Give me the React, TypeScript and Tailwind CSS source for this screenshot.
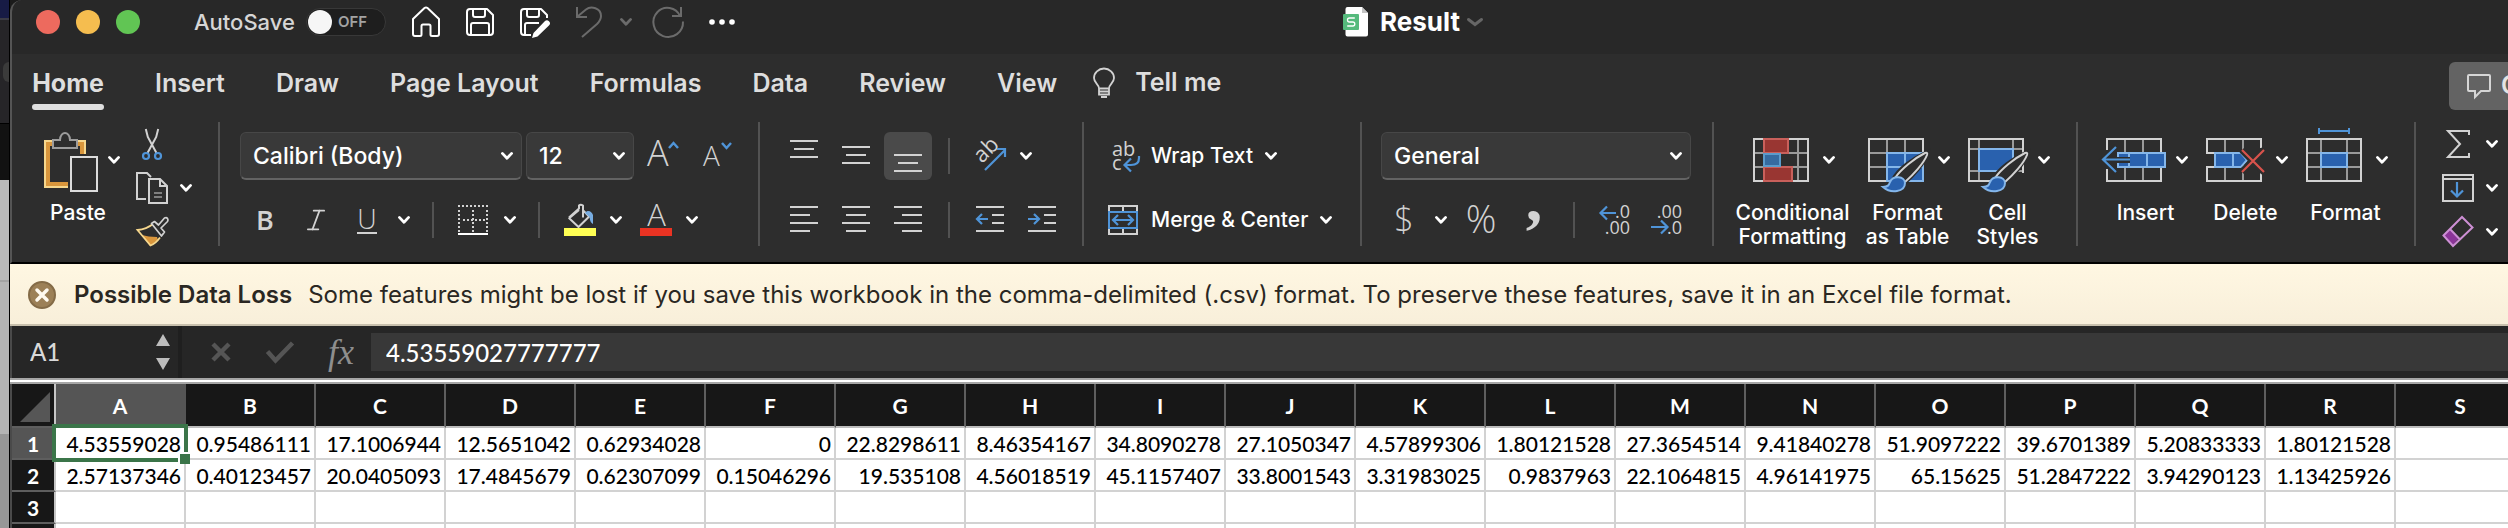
import React from "react";
import { Italic } from "lucide-react";

const LIGHT = "#d2d2d2";
const MID = "#9a9a9a";
const BLUE = "#4f94d8";
const PALE_BLUE = "#84b6ea";
const FILL_BLUE = "#2961ae";
const PANEL = "#2d2d2d";

type IconProps = { w: number; h: number; children: React.ReactNode; className?: string };

function Icon({ w, h, children, className = "" }: IconProps) {
  return (
    <svg
      width={w}
      height={h}
      viewBox={`0 0 ${w} ${h}`}
      fill="none"
      aria-hidden="true"
      className={`shrink-0 overflow-visible ${className}`}
    >
      {children}
    </svg>
  );
}

function Chevron({ className = "text-white" }: { className?: string }) {
  return (
    <Icon w={12} h={8} className={className}>
      <path d="M1.4 1.4 6 6.2l4.6-4.8" stroke="currentColor" strokeWidth="2.8" strokeLinecap="round" strokeLinejoin="round" />
    </Icon>
  );
}

function Lines({ rows }: { rows: [number, number, number][] }) {
  return (
    <Icon w={28} h={28}>
      {rows.map(([x, y, len]) => (
        <path key={y} d={`M${x} ${y}h${len}`} stroke={LIGHT} strokeWidth="2" />
      ))}
    </Icon>
  );
}

function Tool({ label, children, className = "" }: { label: string; children: React.ReactNode; className?: string }) {
  return (
    <button type="button" aria-label={label} className={`flex shrink-0 items-center justify-center ${className}`}>
      {children}
    </button>
  );
}

function Rule({ className = "" }: { className?: string }) {
  return <div className={`h-9 w-0.5 shrink-0 bg-[#525252] ${className}`} />;
}

function GroupRule() {
  return <div className="h-[124px] w-0.5 shrink-0 bg-[#525252]" />;
}

function Combo({ label, value, className }: { label: string; value: string; className: string }) {
  return (
    <div className={`relative shrink-0 ${className}`}>
      <select
        aria-label={label}
        defaultValue={value}
        className="h-12 w-full appearance-none rounded-[6px] border border-b-2 border-[#474747] border-b-[#636363] bg-[#393939] pl-3 pr-8 text-[23px] font-medium leading-[44px] text-white"
      >
        <option>{value}</option>
      </select>
      <div className="pointer-events-none absolute inset-y-0 right-[9px] flex items-center">
        <Chevron />
      </div>
    </div>
  );
}

/* ---------- title bar ---------- */

function TitleBar() {
  return (
    <header className="flex h-[54px] items-center rounded-tl-xl border-l-2 border-[#555555] bg-[#282828] pb-[10px] pl-6">
      <div className="flex gap-4">
        <button type="button" aria-label="Close" className="size-6 rounded-full bg-[#ed6a5e]" />
        <button type="button" aria-label="Minimize" className="size-6 rounded-full bg-[#f5bd4f]" />
        <button type="button" aria-label="Zoom" className="size-6 rounded-full bg-[#61c554]" />
      </div>
      <label htmlFor="autosave" className="ml-[54px] w-[112px] text-[22px] font-medium text-[#d6d6d6]">
        AutoSave
      </label>
      <button
        id="autosave"
        type="button"
        role="switch"
        aria-checked="false"
        className="flex h-7 w-20 items-center gap-1.5 rounded-full border border-[#383838] bg-[#1e1e1e] pl-px"
      >
        <span className="size-6 rounded-full bg-[#f6f6f6]" />
        <span className="text-[15px] font-semibold text-[#a3a3a3]">OFF</span>
      </button>

      <div className="ml-[26px] flex items-center">
        <Tool label="Start" className="mr-[26px]">
          <Icon w={28} h={32}>
            <path
              d="M1 13 12.500 2.100q1.500-1.300 3 0L27 13v15a2 2 0 0 1-2 2h-5a1.500 1.500 0 0 1-1.500-1.500V20a1.500 1.500 0 0 0-1.500-1.500h-6A1.500 1.500 0 0 0 9.500 20v8.500A1.500 1.500 0 0 1 8 30H3a2 2 0 0 1-2-2Z"
              stroke="#fff"
              strokeWidth="2"
              strokeLinejoin="round"
            />
          </Icon>
        </Tool>
        <Tool label="Save" className="mr-[26px]">
          <Icon w={28} h={28}>
            <path d="M4 1h17l6 6v17a3 3 0 0 1-3 3H4a3 3 0 0 1-3-3V4a3 3 0 0 1 3-3ZM7 1v6a2 2 0 0 0 2 2h8a2 2 0 0 0 2-2V1M5 27V17a2 2 0 0 1 2-2h14a2 2 0 0 1 2 2v10" stroke="#fff" strokeWidth="2" strokeLinejoin="round" />
          </Icon>
        </Tool>
        <Tool label="Save as" className="mr-[26px]">
          <Icon w={30} h={28}>
            <path d="M11 27H4a3 3 0 0 1-3-3V4a3 3 0 0 1 3-3h17l6 6v3M7 1v6a2 2 0 0 0 2 2h8a2 2 0 0 0 2-2V1M5 27V17a2 2 0 0 1 2-2h12" stroke="#fff" strokeWidth="2" strokeLinejoin="round" />
            <path d="M12 30l1.500-5L25 13q2-1.700 4 .2t.2 4L17.500 28.500Z" fill="#fff" />
          </Icon>
        </Tool>
        <Tool label="Undo" className="mr-[18px] text-[#6b6b6b]">
          <Icon w={26} h={32}>
            <path d="M1 1v10h10M1.500 10.500 10 3.500C15-.5 25 2 25 10c0 4-2 6-4 8L6 31" stroke="currentColor" strokeWidth="2" />
          </Icon>
        </Tool>
        <Tool label="Undo history" className="mr-5">
          <Chevron className="text-[#6b6b6b]" />
        </Tool>
        <Tool label="Redo" className="mr-[25px] text-[#6b6b6b]">
          <Icon w={32} h={32}>
            <path d="M29 1v9H20M28 10C24 1 12-1 5.500 6A14.800 14.800 0 1 0 31 15.500" stroke="currentColor" strokeWidth="2" />
          </Icon>
        </Tool>
        <Tool label="More commands">
          <Icon w={26} h={6}>
            <circle cx="3" cy="3" r="2.800" fill="#fff" />
            <circle cx="13" cy="3" r="2.800" fill="#fff" />
            <circle cx="23" cy="3" r="2.800" fill="#fff" />
          </Icon>
        </Tool>
      </div>

      <button type="button" className="ml-[608px] flex items-center">
        <Icon w={25} h={30} className="mr-3">
          <path d="M4.500 0H19l6 6v21.500a2 2 0 0 1-2 2H4.500a2 2 0 0 1-2-2V2a2 2 0 0 1 2-2Z" fill="#fff" />
          <path d="M19 0v6h6Z" fill="#c4c4c4" />
          <rect y="7" width="16" height="16" rx="1" fill="#55ba7c" />
          <path d="M11.800 11H6.500a2 2 0 0 0 0 4h3.300a2 2 0 0 1 0 4H4.200" stroke="#fff" strokeWidth="1.300" />
        </Icon>
        <span className="text-[26px] font-bold leading-8 text-white">Result</span>
        <Icon w={16} h={9} className="ml-[7px]">
          <path d="m1.500 1.500 6.500 5 6.500-5" stroke="#666" strokeWidth="3" strokeLinecap="round" />
        </Icon>
      </button>
    </header>
  );
}

/* ---------- ribbon tabs ---------- */

const tabs = ["Home", "Insert", "Draw", "Page Layout", "Formulas", "Data", "Review", "View"];

function Tabs() {
  return (
    <nav className="flex h-[60px] items-start border-l-2 border-[#555555] bg-[#2d2d2d] pl-5 pt-1.5">
      <div className="flex gap-[51px]">
        {tabs.map((t, i) => (
          <button
            key={t}
            type="button"
            className={
              i === 0
                ? "flex h-[50px] w-[72px] flex-col justify-between text-[25px] font-bold leading-[46px] text-[#dedede]"
                : "h-[46px] text-[25px] font-semibold leading-[46px] text-[#dedede]"
            }
          >
            <span className="h-11">{t}</span>
            {i === 0 && <span className="h-1.5 w-full shrink-0 rounded-full bg-[#dedede]" />}
          </button>
        ))}
      </div>
      <button type="button" className="ml-9 flex h-[46px] items-center gap-5 text-[25px] font-semibold text-[#dedede]">
        <Icon w={22} h={30}>
          <path d="M6 20.500C6 16 1 15 1 10a10 9.500 0 0 1 20 0c0 5-5 6-5 10.500ZM6 20.500v6h10v-6M6 23.500h10" stroke={LIGHT} strokeWidth="1.800" />
          <path d="M8 29h6" stroke={LIGHT} strokeWidth="2" />
        </Icon>
        Tell me
      </button>
      <div className="flex-1" />
      <button
        type="button"
        className="mt-0.5 flex h-12 w-[59px] shrink-0 items-center gap-2.5 overflow-hidden whitespace-nowrap rounded-l-[6px] bg-[#636363] pl-[18px] text-[25px] font-semibold text-[#e4e4e4]"
      >
        <Icon w={24} h={24}>
          <path d="M2 1h20a1 1 0 0 1 1 1v14a1 1 0 0 1-1 1h-8l-6 6v-6H2a1 1 0 0 1-1-1V2a1 1 0 0 1 1-1Z" stroke="#d6d6d6" strokeWidth="2" />
        </Icon>
        Comments
      </button>
    </nav>
  );
}

/* ---------- ribbon groups ---------- */

function ClipboardGroup() {
  return (
    <div className="flex w-[206px] shrink-0 pl-8">
      <button type="button" className="flex h-full flex-col items-start pt-1.5">
        <span className="flex items-center gap-2.5">
          <Icon w={54} h={64}>
            <path fill="#f6d78d" d="M0 12h42v48H0z" />
            <path fill="#d9963c" d="M2 14h38v44H2z" />
            <path fill={PANEL} d="M6 18h30v36H6zM24 26h34v40H24z" />
            <path d="M9 20v-8h7c0-5 3-7 5-7s5 2 5 7h7v8Z" fill={PANEL} stroke="#9c9c9c" strokeWidth="2" />
            <path d="M27 29h26v34H27z" stroke="#dcdcdc" strokeWidth="2" />
          </Icon>
          <Chevron />
        </span>
        <span className="mt-[9px] w-[68px] text-center text-[21px] font-medium leading-6 text-white">Paste</span>
      </button>
      <div className="ml-4 flex flex-col">
        <Tool label="Cut" className="h-11 w-8">
          <Icon w={32} h={32}>
            <path d="m9.800 1 2 8 8.700 16M22.200 1l-2 8-8.700 16" stroke={LIGHT} strokeWidth="2" />
            <circle cx="10" cy="28" r="3" stroke={BLUE} strokeWidth="2.200" />
            <circle cx="22" cy="28" r="3" stroke={BLUE} strokeWidth="2.200" />
          </Icon>
        </Tool>
        <Tool label="Copy" className="h-11 gap-3">
          <Icon w={32} h={32}>
            <path d="M10 27H1V1h10l4 4" stroke={LIGHT} strokeWidth="2" />
            <path d="M13 7h11l7 7v17H13ZM24 7v7h7" fill={PANEL} stroke={LIGHT} strokeWidth="2" />
            <path d="M18 21h8M18 25h8" stroke={MID} strokeWidth="1.500" />
          </Icon>
          <Chevron />
        </Tool>
        <Tool label="Format painter" className="h-11 w-8">
          <Icon w={32} h={32}>
            <path d="M6 19c4 1 9 2 15 2l1 3-8 6Z" fill="#d9963c" />
            <path d="M17 8C12 12 7 13.500 1.500 14l13 15.500c4-1.500 7-4.500 9.500-8" stroke="#f6d78d" strokeWidth="1.800" />
            <path d="m15.500 7.500 3-2 4 3.500 6-7q2-1 3 .5t0 3L25 12l3.500 4-3 4Z" fill={PANEL} stroke={LIGHT} strokeWidth="1.700" strokeLinejoin="round" />
          </Icon>
        </Tool>
      </div>
    </div>
  );
}

function FontGroup() {
  return (
    <div className="flex w-[538px] shrink-0 flex-col pl-5 pt-2.5">
      <div className="flex h-12 items-center">
        <Combo label="Font" value="Calibri (Body)" className="mr-1 w-[282px]" />
        <Combo label="Font size" value="12" className="w-[108px]" />
        <Tool label="Increase font size" className="ml-3 mr-5">
          <Icon w={32} h={32}>
            <text x="1" y="26" fontFamily="Open Sans, sans-serif" fontWeight="300" fontSize="36" fill={LIGHT}>A</text>
            <path d="m23 8 4.500-5L32 8" stroke={BLUE} strokeWidth="2.500" />
          </Icon>
        </Tool>
        <Tool label="Decrease font size">
          <Icon w={32} h={32}>
            <text x="5" y="26" fontFamily="Open Sans, sans-serif" fontWeight="300" fontSize="28" fill={LIGHT}>A</text>
            <path d="m24 3 4.500 5L33 3" stroke={BLUE} strokeWidth="2.500" />
          </Icon>
        </Tool>
      </div>
      <div className="mt-4 flex h-12 items-center pl-[9px]">
        <Tool label="Bold" className="mr-[19px] w-8 font-['Open_Sans'] text-[27px] font-semibold leading-8 text-[#d2d2d2]">B</Tool>
        <Tool label="Italic" className="mr-[19px] w-8 text-[#d2d2d2]">
          <Italic size={28} strokeWidth={1.5} />
        </Tool>
        <Tool label="Underline" className="mr-[15px] w-8 text-[#d2d2d2]">
          <span className="border-b-2 border-[#d2d2d2] font-['Open_Sans'] text-[27px] font-light leading-[26px]">U</span>
        </Tool>
        <Tool label="Underline styles" className="mr-[22px]"><Chevron /></Tool>
        <Rule className="mr-[23px]" />
        <Tool label="Borders" className="mr-[15px] w-8">
          <Icon w={30} h={30}>
            <path d="M0 1h30M1 5v22M29 5v22M15 5v22M5 15h22" stroke={LIGHT} strokeWidth="2" strokeDasharray="2 2" />
            <path d="M0 29h30" stroke="#fff" strokeWidth="2" />
          </Icon>
        </Tool>
        <Tool label="Border styles" className="mr-[22px]"><Chevron /></Tool>
        <Rule className="mr-6" />
        <Tool label="Fill color" className="mr-3.5">
          <Icon w={32} h={32}>
            <path d="m5 13.500 10-9v-3q1.500-1.500 4 0v12M15 6l-9.800 8.300L14.500 23l10.700-10.500-6-6" stroke={LIGHT} strokeWidth="2" strokeLinejoin="round" />
            <path d="M21 9c3-4 7-1 8 2v9c-2-1-3-3-3.500-7Z" fill="#78ade2" />
            <path fill="#ffff54" d="M0 24h32v8H0z" />
          </Icon>
        </Tool>
        <Tool label="Fill palette" className="mr-[18px]"><Chevron /></Tool>
        <Tool label="Font color" className="mr-3.5">
          <Icon w={32} h={32}>
            <text x="16.500" y="22" textAnchor="middle" fontFamily="Open Sans, sans-serif" fontWeight="300" fontSize="31" fill={LIGHT}>A</text>
            <path fill="#ea3323" d="M0 24h32v8H0z" />
          </Icon>
        </Tool>
        <Tool label="Font palette"><Chevron /></Tool>
      </div>
    </div>
  );
}

function AlignGroup() {
  return (
    <div className="flex w-[322px] shrink-0 flex-col pl-5 pt-2.5">
      <div className="flex h-12 items-center gap-1">
        <Tool label="Top align" className="size-12">
          <Lines rows={[[0, -1, 28], [4, 7, 20], [0, 15, 28]]} />
        </Tool>
        <Tool label="Middle align" className="size-12">
          <Lines rows={[[0, 5, 28], [4, 13, 20], [0, 21, 28]]} />
        </Tool>
        <Tool label="Bottom align" className="size-12 rounded-[6px] bg-[#4a4a4a]">
          <Lines rows={[[0, 13, 28], [4, 21, 20], [0, 29, 28]]} />
        </Tool>
        <Rule className="ml-3 mr-5" />
        <Tool label="Orientation" className="gap-3.5">
          <Icon w={32} h={32}>
            <text transform="translate(8 24) rotate(-45)" fontFamily="Open Sans, sans-serif" fontSize="22" fill={LIGHT}>ab</text>
            <path d="m11 30 20-20M23 9h8v8" stroke={BLUE} strokeWidth="2.200" />
          </Icon>
          <Chevron />
        </Tool>
      </div>
      <div className="mt-4 flex h-12 items-center gap-1">
        <Tool label="Align left" className="size-12">
          <Lines rows={[[0, 1, 28], [0, 9, 20], [0, 17, 28], [0, 25, 20]]} />
        </Tool>
        <Tool label="Center" className="size-12">
          <Lines rows={[[0, 1, 28], [4, 9, 20], [0, 17, 28], [4, 25, 20]]} />
        </Tool>
        <Tool label="Align right" className="size-12">
          <Lines rows={[[0, 1, 28], [8, 9, 20], [0, 17, 28], [8, 25, 20]]} />
        </Tool>
        <Rule className="mx-3" />
        <Tool label="Decrease indent" className="size-12">
          <Icon w={28} h={28}>
            <path d="M0 1h28M16 9h12M16 17h12M0 25h28" stroke={LIGHT} strokeWidth="2" />
            <path d="M12 13H1.500M6 8l-5 5 5 5" stroke={BLUE} strokeWidth="2.200" />
          </Icon>
        </Tool>
        <Tool label="Increase indent" className="size-12">
          <Icon w={28} h={28}>
            <path d="M0 1h28M16 9h12M16 17h12M0 25h28" stroke={LIGHT} strokeWidth="2" />
            <path d="M0 13h10.500M6 8l5 5-5 5" stroke={BLUE} strokeWidth="2.200" />
          </Icon>
        </Tool>
      </div>
    </div>
  );
}

function WrapGroup() {
  return (
    <div className="flex w-[276px] shrink-0 flex-col items-start pl-[23px] pt-2.5 text-[21px] font-medium text-white">
      <button type="button" className="flex h-12 items-center gap-3">
        <Icon w={32} h={32}>
          <text x="5" y="16" fontFamily="Open Sans, sans-serif" fontSize="20" fill={LIGHT}>ab</text>
          <text x="5" y="30" fontFamily="Open Sans, sans-serif" fontSize="20" fill={LIGHT}>c</text>
          <path d="M32 16v2q0 7-8 7h-6M24 18.500l-6.500 6.500 6.500 6.500" stroke={BLUE} strokeWidth="2.200" />
        </Icon>
        Wrap Text
        <Chevron />
      </button>
      <button type="button" className="mt-4 flex h-12 items-center gap-3">
        <Icon w={32} h={30}>
          <path d="M2 1h28v28H2ZM16 1v28" stroke={LIGHT} strokeWidth="2" />
          <path d="M2 7h28v16H2Z" fill={PANEL} stroke={BLUE} strokeWidth="2" />
          <path d="M6.500 15h19M11 10l-5 5 5 5M21 10l5 5-5 5" stroke={BLUE} strokeWidth="2.200" />
        </Icon>
        Merge &amp; Center
        <Chevron />
      </button>
    </div>
  );
}

function Decimal({ top, bottom, children }: { top: string; bottom: string; children: React.ReactNode }) {
  return (
    <Icon w={32} h={32}>
      <text x="32" y="14" textAnchor="end" fontFamily="Open Sans, sans-serif" fontSize="18" fill={LIGHT}>{top}</text>
      <text x="32" y="30" textAnchor="end" fontFamily="Open Sans, sans-serif" fontSize="18" fill={LIGHT}>{bottom}</text>
      {children}
    </Icon>
  );
}

function NumberGroup() {
  return (
    <div className="flex w-[350px] shrink-0 flex-col pl-[19px] pt-2.5">
      <Combo label="Number format" value="General" className="w-[310px]" />
      <div className="mt-4 flex h-12 items-center pl-[7px]">
        <Tool label="Accounting format" className="mr-[15px]">
          <Icon w={32} h={32}>
            <text x="16" y="28" textAnchor="middle" fontFamily="Open Sans, sans-serif" fontWeight="300" fontSize="34" fill={LIGHT}>$</text>
          </Icon>
        </Tool>
        <Tool label="Currencies" className="mr-[18px]"><Chevron /></Tool>
        <Tool label="Percent style" className="mr-[21px]">
          <Icon w={32} h={32}>
            <text x="16" y="29" textAnchor="middle" fontFamily="Open Sans, sans-serif" fontWeight="300" fontSize="38" fill={LIGHT}>%</text>
          </Icon>
        </Tool>
        <Tool label="Comma style" className="mr-[23px]">
          <Icon w={32} h={32}>
            <text x="16" y="17" textAnchor="middle" fontFamily="Liberation Serif, serif" fontWeight="700" fontSize="66" fill={LIGHT}>,</text>
          </Icon>
        </Tool>
        <Rule className="mr-[23px]" />
        <Tool label="Increase decimal" className="mr-5">
          <Decimal top=".0" bottom=".00">
            <path d="M18 9H2.500M9 2.500 2.500 9l6.500 6.500" stroke={BLUE} strokeWidth="2.200" />
          </Decimal>
        </Tool>
        <Tool label="Decrease decimal">
          <Decimal top=".00" bottom=".0">
            <path d="M1 23h16.500M11 16.500l6.500 6.500-6.500 6.500" stroke={BLUE} strokeWidth="2.200" />
          </Decimal>
        </Tool>
      </div>
    </div>
  );
}

function BigButton({ label, icon, className = "w-[82px]" }: { label: string; icon: React.ReactNode; className?: string }) {
  return (
    <button type="button" className={`flex flex-col items-center gap-[9px] ${className}`}>
      <span className="flex items-center gap-3.5">
        {icon}
        <Chevron />
      </span>
      <span className="whitespace-pre pr-[3px] text-center text-[21px] font-medium leading-6 text-white">{label}</span>
    </button>
  );
}

function Brush() {
  return (
    <g>
      <path d="M26 52C31 42 46 31 58 26c-3 9-14 21-22 28Z" fill={PANEL} stroke={PANEL} strokeWidth="6" />
      <path d="M27 50c6-9 20-20 30-25q3-1 2 2C56 35 45 47 37 54" fill={PANEL} stroke={LIGHT} strokeWidth="2" />
      <path d="M15 59c5 0 6-2 7-5 3-7 15-6 15 1 0 9-14 11-22 4Z" fill={FILL_BLUE} stroke={PALE_BLUE} strokeWidth="2" />
    </g>
  );
}

function StylesGroup() {
  return (
    <div className="flex w-[362px] shrink-0 gap-[18px] pl-6 pt-1.5">
      <BigButton
        label={"Conditional\nFormatting"}
        className="w-[112px]"
        icon={
          <Icon w={56} h={64}>
            <path d="M1 25h54M1 39h54M45 11v42" stroke={MID} strokeWidth="2" />
            <path d="M1 11h54v42H1z" stroke={LIGHT} strokeWidth="2" />
            <path d="M11 11h24v14H11zM11 39h28v14H11z" fill="#993632" stroke="#c9605b" strokeWidth="2" />
            <path d="M11 26h16v12H11z" fill="#366ba0" stroke="#5b9bcb" strokeWidth="2" />
            <path d="M29 27h15v11H29z" fill={PANEL} />
          </Icon>
        }
      />
      <BigButton
        label={"Format\nas Table"}
        icon={
          <Icon w={56} h={64}>
            <path d="M1 25h54M1 39h54M19 11v42M37 11v42" stroke={MID} strokeWidth="2" />
            <path d="M1 11h54v42H1z" stroke={LIGHT} strokeWidth="2" />
            <path d="M19 25h36v28H19zM37 25v28M19 39h36" fill={FILL_BLUE} stroke={PALE_BLUE} strokeWidth="2" />
            <Brush />
          </Icon>
        }
      />
      <BigButton
        label={"Cell\nStyles"}
        icon={
          <Icon w={56} h={64}>
            <path d="M1 11h54v42H1z" stroke={LIGHT} strokeWidth="2" />
            <path d="M2 21h52M2 43h52M11 12v40M45 12v40" stroke={MID} strokeWidth="2" />
            <path d="M11 21h34v22H11z" fill={FILL_BLUE} stroke={PALE_BLUE} strokeWidth="2" />
            <path d="M30 45h28v11H30z" fill={PANEL} />
            <Brush />
          </Icon>
        }
      />
    </div>
  );
}

function CellsGroup() {
  return (
    <div className="flex w-[336px] shrink-0 gap-[18px] pl-7 pt-1.5">
      <BigButton
        label="Insert"
        icon={
          <Icon w={56} h={64}>
            <path d="M19 11v42M37 11v42" stroke={MID} strokeWidth="2" />
            <path d="M1 22V11h54v14M1 41v12h54V39" stroke={LIGHT} strokeWidth="2" />
            <path d="M12 25h47v14H12z" fill={FILL_BLUE} stroke={PALE_BLUE} strokeWidth="2" />
            <path d="M23 25v14M41 25v14" stroke={PALE_BLUE} strokeWidth="2" />
            <path d="M24 32H2M10 19-3 31.500 10 44" stroke={PANEL} strokeWidth="6" />
            <path d="M24 31.500H-3M10 19-3 31.500 10 44" stroke={BLUE} strokeWidth="2.200" />
          </Icon>
        }
      />
      <BigButton
        label="Delete"
        icon={
          <Icon w={56} h={64}>
            <path d="M19 11v42M37 11v42" stroke={MID} strokeWidth="2" />
            <path d="M55 20v-9H1v14h8M9 39H1v14h54v-8" stroke={LIGHT} strokeWidth="2" />
            <path d="M9 25h26l6 7-6 7H9z" fill={FILL_BLUE} stroke={PALE_BLUE} strokeWidth="2" />
            <path d="M27 25v14" stroke={PALE_BLUE} strokeWidth="2" />
            <path d="m36 22 22 22M58 22 36 44" stroke={PANEL} strokeWidth="7" />
            <path d="m36 22 22 22M58 22 36 44" stroke="#d9534c" strokeWidth="2.200" />
          </Icon>
        }
      />
      <BigButton
        label="Format"
        icon={
          <Icon w={56} h={64}>
            <path d="M13 0v6M43 0v6M13 3h30" stroke={BLUE} strokeWidth="2" />
            <path d="M1 25h54M1 39h54M15 11v42M41 11v42" stroke={MID} strokeWidth="2" />
            <path d="M1 11h54v42H1z" stroke={LIGHT} strokeWidth="2" />
            <path d="M15 25h26v14H15z" fill={FILL_BLUE} stroke={PALE_BLUE} strokeWidth="2" />
          </Icon>
        }
      />
    </div>
  );
}

function EditingGroup() {
  return (
    <div className="flex shrink-0 flex-col pl-[26px]">
      <Tool label="AutoSum" className="h-11 gap-3">
        <Icon w={32} h={32}>
          <path d="M27 7V3H6l12 13L6 29h21v-4" stroke={LIGHT} strokeWidth="2" />
        </Icon>
        <Chevron />
      </Tool>
      <Tool label="Fill" className="h-11 gap-3">
        <Icon w={32} h={28}>
          <path d="M1 1h30v26H1zM1 5h30" stroke={LIGHT} strokeWidth="2" />
          <path d="M15 8v14M9 16.500l6 6 6-6" stroke={BLUE} strokeWidth="2.200" />
        </Icon>
        <Chevron />
      </Tool>
      <Tool label="Clear" className="h-11 gap-3">
        <Icon w={32} h={32}>
          <path d="m8 13 9 9-6 7-9.500-9.500Z" fill="#8b3598" />
          <path d="M1.500 19.500 20 1l10.500 10.500L11 30ZM8 13l9.500 10" stroke="#cd8fd4" strokeWidth="2" />
        </Icon>
        <Chevron />
      </Tool>
    </div>
  );
}

function Ribbon() {
  return (
    <section className="flex h-[150px] overflow-hidden border-b-2 border-l-2 border-b-black border-l-[#555555] bg-[#2d2d2d] pt-2">
      <ClipboardGroup />
      <GroupRule />
      <FontGroup />
      <GroupRule />
      <AlignGroup />
      <GroupRule />
      <WrapGroup />
      <GroupRule />
      <NumberGroup />
      <GroupRule />
      <StylesGroup />
      <GroupRule />
      <CellsGroup />
      <GroupRule />
      <EditingGroup />
    </section>
  );
}

/* ---------- notice and formula bar ---------- */

function Notice() {
  return (
    <div role="alert" className="flex h-[62px] items-center border-b-2 border-[#c8c0ad] bg-linear-to-b from-[#fff7e2] to-[#f8efda] pl-[18px] pt-0.5 text-[#2a2722]">
      <button type="button" aria-label="Dismiss" className="mr-[18px]">
        <Icon w={28} h={28}>
          <circle cx="14" cy="14" r="13" fill="#9c8057" stroke="#846b47" strokeWidth="2" />
          <path d="m9 9 10 10M19 9 9 19" stroke="#fffaf0" strokeWidth="3.500" strokeLinecap="round" />
        </Icon>
      </button>
      <strong className="mr-4 text-2xl font-semibold">Possible Data Loss</strong>
      <span className="whitespace-nowrap text-2xl">
        Some features might be lost if you save this workbook in the comma-delimited (.csv) format. To preserve these features, save it in an Excel file format.
      </span>
    </div>
  );
}

function FormulaBar() {
  return (
    <div className="flex h-[52px] items-center border-l-2 border-[#4a4a4a] bg-[#262626] font-['Lato'] text-2xl font-medium">
      <input
        aria-label="Name box"
        defaultValue="A1"
        className="w-[144px] bg-transparent pl-[18px] text-[#d9d9d9] outline-none"
      />
      <Tool label="Cell history">
        <Icon w={14} h={36}>
          <path d="m7 0 7 12H0ZM7 36l7-12H0Z" fill="#bdbdbd" />
        </Icon>
      </Tool>
      <div className="ml-2 h-full w-1 bg-[#1f1f1f]" />
      <Tool label="Cancel" className="ml-[29px]">
        <Icon w={20} h={20}>
          <path d="m2 2 16 16M18 2 2 18" stroke="#555" strokeWidth="4.500" />
        </Icon>
      </Tool>
      <Tool label="Enter" className="ml-[35px]">
        <Icon w={28} h={22}>
          <path d="m1.500 10.500 8 9L26.500 2" stroke="#555" strokeWidth="4.500" />
        </Icon>
      </Tool>
      <span className="ml-[34px] w-[43px] font-['Liberation_Serif'] text-[36px] italic leading-9 text-[#8e8e8e]">fx</span>
      <input
        aria-label="Formula"
        defaultValue="4.53559027777777"
        className="h-[38px] min-w-0 flex-1 bg-[#383838] pl-[15px] text-white outline-none"
      />
    </div>
  );
}

/* ---------- sheet ---------- */

const columns = "ABCDEFGHIJKLMNOPQRS".split("");
const rows: string[][] = [
  ["4.53559028", "0.95486111", "17.1006944", "12.5651042", "0.62934028", "0", "22.8298611", "8.46354167", "34.8090278", "27.1050347", "4.57899306", "1.80121528", "27.3654514", "9.41840278", "51.9097222", "39.6701389", "5.20833333", "1.80121528", ""],
  ["2.57137346", "0.40123457", "20.0405093", "17.4845679", "0.62307099", "0.15046296", "19.535108", "4.56018519", "45.1157407", "33.8001543", "3.31983025", "0.9837963", "22.1064815", "4.96141975", "65.15625", "51.2847222", "3.94290123", "1.13425926", ""],
  columns.map(() => ""),
  columns.map(() => ""),
];

function Sheet() {
  return (
    <div className="min-h-0 flex-1 overflow-hidden border-l-2 border-[#4a4a4a] bg-white">
      <table className="w-max table-fixed border-separate border-spacing-0 font-['Lato'] text-[21px] leading-7">
        <thead>
          <tr className="h-11 text-white">
            <th aria-label="Select all" className="w-11 border-b-2 border-r-2 border-b-[#5e5e5e] border-r-[#c6c6c6] bg-[#171717] p-0">
              <Icon w={42} h={42}>
                <path d="M38 8v30H8Z" fill="#565656" />
              </Icon>
            </th>
            {columns.map((c, i) => (
              <th
                key={c}
                scope="col"
                className={
                  i === 0
                    ? "w-[130px] border-b-2 border-r-2 border-b-[#bdbdbd] border-r-[#555555] bg-[#555555] p-0 pt-0.5 font-bold"
                    : "w-[130px] border-b-2 border-r-2 border-b-[#bdbdbd] border-r-[#5e5e5e] bg-[#171717] p-0 pt-0.5 font-bold"
                }
              >
                {c}
              </th>
            ))}
          </tr>
        </thead>
        <tbody>
          {rows.map((r, ri) => (
            <tr key={ri} className="h-8">
              <th
                scope="row"
                className={
                  ri === 0
                    ? "h-8 border-b-2 border-r-2 border-b-[#5e5e5e] border-r-[#c6c6c6] bg-[#555555] p-0 pt-0.5 font-bold text-white"
                    : "h-8 border-b-2 border-r-2 border-b-[#5e5e5e] border-r-[#c6c6c6] bg-[#171717] p-0 pt-0.5 font-bold text-white"
                }
              >
                {ri + 1}
              </th>
              {r.map((v, ci) => (
                <td key={ci} className="relative h-8 border-b-2 border-r-2 border-[#d2d2d2] p-0 pr-[3px] pt-0.5 text-right font-medium text-black">
                  {v}
                  {ri === 0 && ci === 0 && (
                    <>
                      <span className="pointer-events-none absolute -bottom-1 -left-1 -right-1 -top-1 border-4 border-[#3b7549]" />
                      <span className="absolute -bottom-1.5 -right-1.5 z-10 size-3 border-l-2 border-t-2 border-white bg-[#3b7549]" />
                    </>
                  )}
                </td>
              ))}
            </tr>
          ))}
        </tbody>
      </table>
    </div>
  );
}

function Backdrop() {
  return (
    <div className="flex w-2.5 shrink-0 flex-col border-r border-black bg-[#1b1b1b]">
      <div className="h-5 border-b-2 border-[#3b3b45] bg-[#171b45]" />
      <div className="flex h-[104px] items-center justify-end border-b border-black bg-[#262528]">
        <div className="h-5 w-1.5 rounded-l-full bg-[#3b3b3b]" />
      </div>
      <div className="h-14 bg-[#121212]" />
      <div className="h-[102px] border-b-2 border-[#a2a2a2] bg-[#b9b9b9]" />
      <div className="h-[152px] bg-[#b4b4b4]" />
      <div className="flex-1 bg-[#979797]" />
    </div>
  );
}

export default function App() {
  return (
    <div className="flex h-screen overflow-hidden bg-[#1b1b1b] font-['Inter',sans-serif]">
      <Backdrop />
      <main className="flex min-w-0 flex-1 flex-col overflow-hidden">
        <TitleBar />
        <Tabs />
        <Ribbon />
        <Notice />
        <FormulaBar />
        <div className="h-1.5 shrink-0 border-y-2 border-[#a6a6a6] bg-white" />
        <Sheet />
      </main>
    </div>
  );
}
